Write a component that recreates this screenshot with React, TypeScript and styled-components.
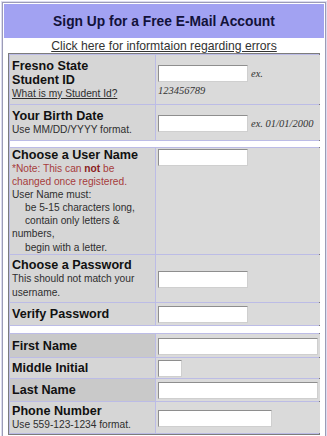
import styled, { createGlobalStyle } from 'styled-components';

const GlobalStyle = createGlobalStyle`
  body {
    margin: 0;
    background: #ffffff;
    font-family: 'Liberation Sans', Arial, sans-serif;
  }
`;

export default function App() {
  return (
    <>
      <GlobalStyle />
      <Frame>
        <Header>Sign Up for a Free E-Mail Account</Header>
        <LinkRow>
          <ErrorLink href="#">Click here for informtaion regarding errors</ErrorLink>
        </LinkRow>
        <FormTable>
          <LabelCell>
            <Label>
              Fresno State
              <br />
              Student ID
            </Label>
            <Hint as="a" href="#" $underline>
              What is my Student Id?
            </Hint>
          </LabelCell>
          <FieldCell>
            <FieldLine>
              <TextInput $width={90} />
              <Example>ex.</Example>
            </FieldLine>
            <Example $block>123456789</Example>
          </FieldCell>

          <LabelCell>
            <Label>Your Birth Date</Label>
            <Hint>Use MM/DD/YYYY format.</Hint>
          </LabelCell>
          <FieldCell>
            <FieldLine>
              <TextInput $width={90} />
              <Example>ex. 01/01/2000</Example>
            </FieldLine>
          </FieldCell>

          <Spacer />

          <LabelCell $top>
            <Label>Choose a User Name</Label>
            <Note>
              *Note: This can <b>not</b> be
              <br />
              changed once registered.
            </Note>
            <Hint>User Name must:</Hint>
            <Hint $indent>be 5-15 characters long,</Hint>
            <Hint $indent>contain only letters &amp;</Hint>
            <Hint>numbers,</Hint>
            <Hint $indent>begin with a letter.</Hint>
          </LabelCell>
          <FieldCell $top>
            <TextInput $width={90} />
          </FieldCell>

          <LabelCell>
            <Label>Choose a Password</Label>
            <Hint>
              This should not match your
              <br />
              username.
            </Hint>
          </LabelCell>
          <FieldCell>
            <TextInput type="password" $width={90} />
          </FieldCell>

          <LabelCell>
            <Label>Verify Password</Label>
          </LabelCell>
          <FieldCell>
            <TextInput type="password" $width={90} />
          </FieldCell>

          <Spacer />

          <LabelCell $dark>
            <Label>First Name</Label>
          </LabelCell>
          <FieldCell>
            <TextInput $width={160} />
          </FieldCell>

          <LabelCell>
            <Label>Middle Initial</Label>
          </LabelCell>
          <FieldCell>
            <TextInput $width={24} />
          </FieldCell>

          <LabelCell $dark>
            <Label>Last Name</Label>
          </LabelCell>
          <FieldCell>
            <TextInput $width={160} />
          </FieldCell>

          <LabelCell>
            <Label>Phone Number</Label>
            <Hint>Use 559-123-1234 format.</Hint>
          </LabelCell>
          <FieldCell>
            <TextInput $width={114} />
          </FieldCell>
        </FormTable>
      </Frame>
    </>
  );
}

const Frame = styled.div`
  box-sizing: border-box;
  width: 324px;
  margin: 2px 1px 0 2px;
  padding: 1px;
  border: 1px solid #9c9cb6;
  box-shadow: 0 0 0 1px #dcdcef;
`;

const Header = styled.div`
  height: 34px;
  display: flex;
  align-items: center;
  justify-content: center;
  background: #a2a2f2;
  color: #12123a;
  font-size: 13.8px;
  font-weight: bold;
`;

const LinkRow = styled.div`
  height: 15px;
  display: flex;
  align-items: center;
  justify-content: center;
`;

const ErrorLink = styled.a`
  color: #333333;
  font-size: 12.2px;
  text-decoration: underline;
`;

const FormTable = styled.div`
  margin: 0 4px;
  border: 1px solid #7c7c7c;
  padding: 1px;
  background: #bcbce6;
  display: grid;
  grid-template-columns: 145px 1fr;
  grid-template-rows: 49px 35px 6px 106px 47px 22px 7px 23px 20px 22px 31px;
  gap: 1px;
`;

const LabelCell = styled.div<{ $dark?: boolean; $top?: boolean }>`
  display: flex;
  flex-direction: column;
  justify-content: ${(p) => (p.$top ? 'flex-start' : 'center')};
  padding: 0 2px;
  background: ${(p) => (p.$dark ? '#c9c9c9' : '#d6d6d6')};
  color: #111111;
  overflow: hidden;
`;

const FieldCell = styled.div<{ $top?: boolean }>`
  display: flex;
  flex-direction: column;
  justify-content: ${(p) => (p.$top ? 'flex-start' : 'center')};
  align-items: flex-start;
  padding: 1px 2px 0;
  background: #dadada;
`;

const Spacer = styled.div`
  grid-column: 1 / -1;
  background: #ffffff;
`;

const Label = styled.div`
  font-size: 12.6px;
  font-weight: bold;
  line-height: 14px;
`;

const Hint = styled.div<{ $indent?: boolean; $underline?: boolean }>`
  display: block;
  font-size: 10.2px;
  line-height: 13.1px;
  color: #2e2e2e;
  white-space: nowrap;
  padding-left: ${(p) => (p.$indent ? '13px' : '0')};
  text-decoration: ${(p) => (p.$underline ? 'underline' : 'none')};
`;

const Note = styled.div`
  font-size: 10.2px;
  line-height: 13.1px;
  color: #a63c3c;
  white-space: nowrap;

  b {
    color: #8a1c1c;
  }
`;

const FieldLine = styled.div`
  display: flex;
  align-items: center;
  gap: 3px;
`;

const TextInput = styled.input<{ $width: number }>`
  box-sizing: border-box;
  width: ${(p) => p.$width}px;
  height: 17px;
  margin: 0;
  padding: 0 2px;
  background: #ffffff;
  border: 1px solid;
  border-color: #8e8e8e #cfcfcf #cfcfcf #8e8e8e;
`;

const Example = styled.span<{ $block?: boolean }>`
  display: ${(p) => (p.$block ? 'block' : 'inline')};
  margin-top: ${(p) => (p.$block ? '3px' : '0')};
  font-family: 'Liberation Serif', 'Times New Roman', serif;
  font-style: italic;
  font-size: 10.5px;
  color: #333333;
`;
